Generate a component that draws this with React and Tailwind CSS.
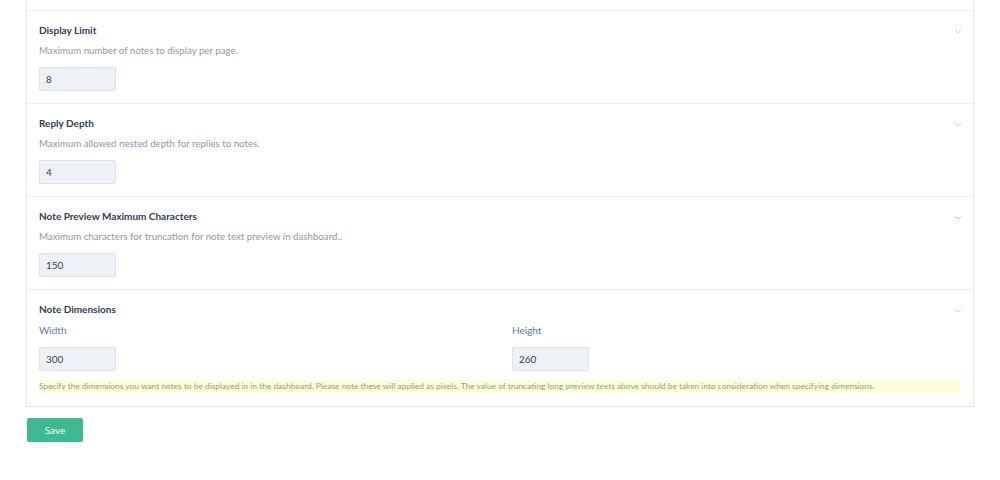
import React, { useState } from 'react';

const sections = [
    { key: 'limit', title: 'Display Limit', desc: 'Maximum number of notes to display per page.', value: '8' },
    { key: 'depth', title: 'Reply Depth', desc: 'Maximum allowed nested depth for replies to notes.', value: '4' },
    { key: 'preview', title: 'Note Preview Maximum Characters', desc: 'Maximum characters for truncation for note text preview in dashboard..', value: '150' },
];

function Chevron() {
    return (
        <svg width="8" height="5" viewBox="0 0 8 5" className="absolute right-[11px] top-[18px]" fill="none">
            <path d="M1 1l3 3 3-3" stroke="#cfd3db" strokeWidth="1" />
        </svg>
    );
}

function NumberInput({ value }) {
    const [val, setVal] = useState(value);
    return (
        <input
            value={val}
            onChange={e => setVal(e.target.value)}
            className="block w-[77px] h-[24px] px-[6px] bg-[#eef1f6] border border-[#dde2ea] rounded-[2px] text-[10px] text-[#3a4557] outline-none"
        />
    );
}

export default function App() {
    return (
        <div className="min-h-screen bg-white px-[26px] font-['Lato',sans-serif]">
            <div className="border-x border-b border-[#e4e7ee]">
                {/* section above, scrolled off */}
                <div className="h-[11px] border-b border-[#eceef3]" />

                {sections.map(s => (
                    <div key={s.key} className="relative px-[12px] pt-[13px] h-[93px] border-b border-[#eceef3]">
                        <Chevron />
                        <h3 className="text-[10px] leading-[12px] font-bold text-[#2f3d52]">{s.title}</h3>
                        <p className="mt-[8px] text-[9.7px] leading-[12px] text-[#8e97a8]">{s.desc}</p>
                        <div className="mt-[11px]">
                            <NumberInput value={s.value} />
                        </div>
                    </div>
                ))}

                {/* Note Dimensions */}
                <div className="relative px-[12px] pt-[13px] pb-[13px]">
                    <Chevron />
                    <h3 className="text-[10px] leading-[12px] font-bold text-[#2f3d52]">Note Dimensions</h3>
                    <div className="grid grid-cols-2 gap-6">
                        <div>
                            <label className="block mt-[9px] text-[10px] leading-[12px] text-[#5b7ba6]">Width</label>
                            <div className="mt-[11px]"><NumberInput value="300" /></div>
                        </div>
                        <div>
                            <label className="block mt-[9px] text-[10px] leading-[12px] text-[#5b7ba6]">Height</label>
                            <div className="mt-[11px]"><NumberInput value="260" /></div>
                        </div>
                    </div>
                    <p className="mt-[9px] bg-[#fefedd] text-[8.4px] leading-[13px] text-[#9a9a78] whitespace-nowrap overflow-hidden">
                        Specify the dimensions you want notes to be displayed in in the dashboard. Please note these will applied as pixels. The value of truncating long preview texts above should be taken into consideration when specifying dimensions.
                    </p>
                </div>
            </div>

            <button className="block mt-[11px] ml-px w-[56px] h-[24px] rounded-[2px] bg-[#3dba93] text-white text-[10px]">
                Save
            </button>
        </div>
    );
}
